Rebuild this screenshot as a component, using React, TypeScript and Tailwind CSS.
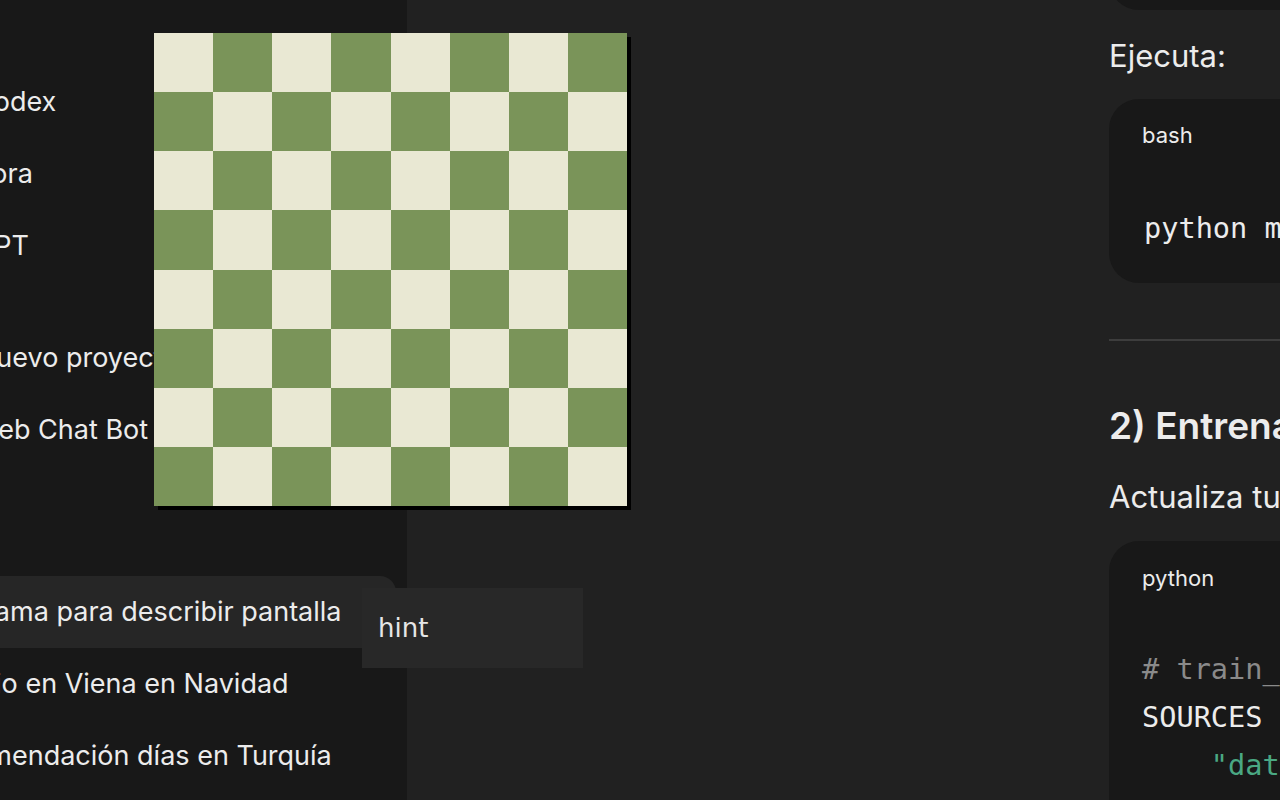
import React from "react";

const sans = { fontFamily: "Inter, 'Noto Sans', sans-serif" };
const mono = { fontFamily: "'DejaVu Sans Mono', 'Liberation Mono', monospace" };

function Board() {
  const squares = [];
  for (let r = 0; r < 8; r++) {
    for (let c = 0; c < 8; c++) {
      const light = (r + c) % 2 === 0;
      squares.push(
        <div key={`${r}-${c}`} className={light ? "bg-[#e9e8d3]" : "bg-[#7a9459]"} />
      );
    }
  }
  return (
    <div className="absolute left-[154px] top-[33px] grid h-[473px] w-[473px] grid-cols-8 grid-rows-8 shadow-[4px_4px_0_#000]">
      {squares}
    </div>
  );
}

function Row({ text, shift, hover }: { text: string; shift: string; hover?: boolean }) {
  return (
    <div
      className={`flex h-[72px] items-center whitespace-nowrap text-[27px] text-[#ececec] ${shift} ${
        hover ? "mr-[11px] rounded-[16px] bg-[#262626]" : ""
      }`}
    >
      {text}
    </div>
  );
}

export default function App() {
  return (
    <div className="relative flex h-[800px] w-[1280px] overflow-hidden bg-[#212121]" style={sans}>
      {/* Sidebar */}
      <aside className="flex h-full w-[407px] shrink-0 flex-col overflow-hidden bg-[#181818] pt-[66px]">
        <Row text="Codex" shift="-ml-[26px]" />
        <Row text="Sora" shift="-ml-[26px]" />
        <Row text="GPT" shift="-ml-[26px]" />
        <div className="h-[40px]" />
        <Row text="Nuevo proyecto" shift="-ml-[24px]" />
        <Row text="Web Chat Bot" shift="-ml-[27px]" />
        <div className="h-[110px]" />
        <Row text="Programa para describir pantalla" shift="-ml-[75px]" hover />
        <Row text="Ocio en Viena en Navidad" shift="-ml-[41px]" />
        <Row text="Recomendación días en Turquía" shift="-ml-[76px]" />
      </aside>

      {/* Main */}
      <main className="flex min-w-0 flex-1 flex-col pl-[702px] text-[#ececec]">
        <div className="-mt-[190px] h-[200px] w-[600px] shrink-0 rounded-[30px] bg-[#181818]" />
        <p className="mt-[26px] h-[40px] whitespace-nowrap text-[31px] leading-[40px]">Ejecuta:</p>
        <div className="mt-[23px] flex h-[184px] w-[600px] shrink-0 flex-col rounded-[30px] bg-[#181818] pl-[33px]">
          <div className="mt-[21px] h-[30px] text-[22px] leading-[30px]">bash</div>
          <div className="mt-[54px] h-[48px] whitespace-nowrap pl-[2px] text-[28.6px] leading-[48px]" style={mono}>
            python main.py
          </div>
        </div>
        <div className="mt-[56px] h-[2px] w-[600px] shrink-0 bg-[#3d3d3d]" />
        <h3 className="mt-[61px] h-[48px] whitespace-nowrap text-[37px] font-semibold leading-[48px]">
          2) Entrenamiento
        </h3>
        <p className="mt-[27px] h-[40px] whitespace-nowrap text-[31px] leading-[40px]">Actualiza tu script</p>
        <div className="mt-[24px] flex h-[300px] w-[600px] shrink-0 flex-col rounded-[30px] bg-[#181818] pl-[33px]">
          <div className="mt-[22px] h-[30px] text-[22px] leading-[30px]">python</div>
          <div className="mt-[52px] whitespace-pre text-[28.6px] leading-[48px]" style={mono}>
            <div className="text-[#8a8a8a]"># train_model.py</div>
            <div>SOURCES = [</div>
            <div className="text-[#4aa883]">    "data/raw",</div>
          </div>
        </div>
      </main>

      <Board />

      {/* tooltip */}
      <div className="absolute left-[362px] top-[588px] flex h-[80px] w-[221px] items-center bg-[#282828] pl-[16px]">
        <span className="text-[26px] leading-none text-[#e6e6e6]" style={{ fontFamily: "'DejaVu Sans', sans-serif" }}>
          hint
        </span>
      </div>
    </div>
  );
}
